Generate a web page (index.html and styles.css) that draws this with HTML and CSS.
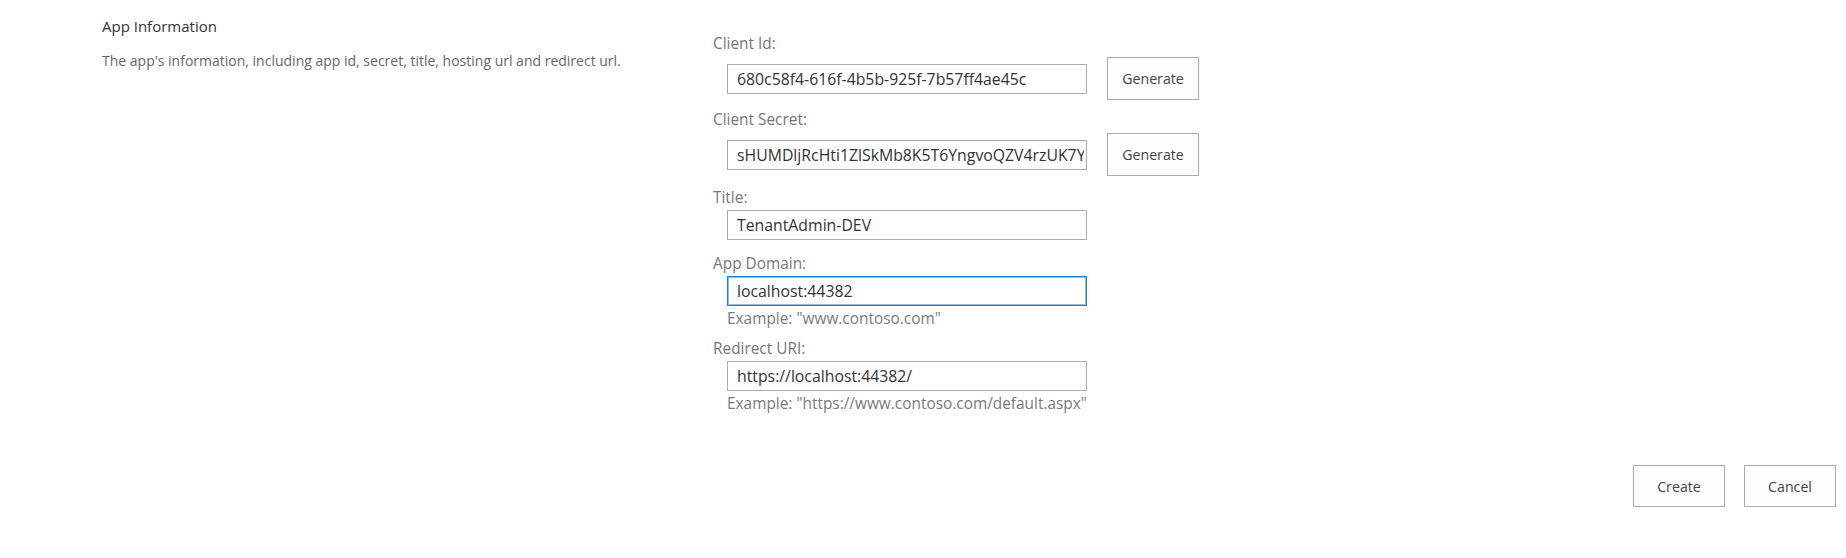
FILE: index.html
```html
<!DOCTYPE html>
<html>
<head>
<meta charset="utf-8">
<link rel="stylesheet" href="styles.css">
<title>App Information</title>
</head>
<body>
<div class="page">
  <div class="section">
    <div class="info">
      <h2 class="info-title">App Information</h2>
      <p class="info-desc">The app's information, including app id, secret, title, hosting url and redirect url.</p>
    </div>
    <div class="fields">
      <div class="field">
        <label class="field-label">Client Id:</label>
        <div class="field-row with-btn">
          <input class="text-input" type="text" value="680c58f4-616f-4b5b-925f-7b57ff4ae45c">
          <button class="btn">Generate</button>
        </div>
      </div>
      <div class="field">
        <label class="field-label">Client Secret:</label>
        <div class="field-row with-btn">
          <input class="text-input" type="text" value="sHUMDljRcHti1ZlSkMb8K5T6YngvoQZV4rzUK7Yx0Qe=">
          <button class="btn">Generate</button>
        </div>
      </div>
      <div class="field field-title">
        <label class="field-label">Title:</label>
        <div class="field-row">
          <input class="text-input" type="text" value="TenantAdmin-DEV">
        </div>
      </div>
      <div class="field field-domain">
        <label class="field-label">App Domain:</label>
        <div class="field-row">
          <input class="text-input focused" type="text" value="localhost:44382">
        </div>
        <div class="field-hint">Example: "www.contoso.com"</div>
      </div>
      <div class="field">
        <label class="field-label">Redirect URI:</label>
        <div class="field-row">
          <input class="text-input" type="text" value="https://localhost:44382/">
        </div>
        <div class="field-hint">Example: "https://www.contoso.com/default.aspx"</div>
      </div>
    </div>
  </div>
  <div class="actions">
    <button class="btn btn-lg">Create</button>
    <button class="btn btn-lg">Cancel</button>
  </div>
</div>
</body>
</html>
```
FILE: styles.css
```css
html, body {
  margin: 0;
  padding: 0;
  background: #ffffff;
}
body {
  font-family: "Open Sans", "Noto Sans", sans-serif;
  color: #444444;
}
.page {
  width: 1846px;
  display: flex;
  flex-direction: column;
}
.section {
  display: flex;
  flex-direction: row;
}
.info {
  width: 713px;
  flex-shrink: 0;
  box-sizing: border-box;
  padding-left: 102px;
  padding-top: 15px;
}
.info-title {
  margin: 0;
  font-size: 15px;
  font-weight: 400;
  line-height: 22px;
  color: #333333;
}
.info-desc {
  margin: 14px 0 0 0;
  font-size: 14px;
  line-height: 20px;
  color: #666666;
}
.fields {
  display: flex;
  flex-direction: column;
  gap: 10px;
  padding-top: 34px;
}
.field {
  display: flex;
  flex-direction: column;
}
.field-title {
  margin-top: 2px;
}
.field-domain {
  margin-top: 4px;
}
.field-label {
  font-size: 15.4px;
  line-height: 20px;
  color: #767676;
}
.field-row {
  display: flex;
  align-items: center;
  gap: 20px;
  padding-left: 14px;
  margin-top: 2px;
}
.field-row.with-btn {
  margin-top: 3px;
}
.text-input {
  width: 360px;
  height: 30px;
  box-sizing: border-box;
  border: 1px solid #ababab;
  background: #ffffff;
  padding: 0 2px 0 9px;
  font-family: "Open Sans", "Noto Sans", sans-serif;
  font-size: 15.8px;
  color: #333333;
  outline: none;
  margin: 0;
}
.text-input.focused {
  border-color: #1d7fd2;
  box-shadow: inset 0 0 0 1px #8cc0ec;
}
.field-hint {
  padding-left: 14px;
  margin-top: 3px;
  font-size: 15.4px;
  line-height: 20px;
  color: #7a7a7a;
}
.btn {
  width: 92px;
  height: 43px;
  box-sizing: border-box;
  border: 1px solid #ababab;
  background: #fdfdfd;
  font-family: "Open Sans", "Noto Sans", sans-serif;
  font-size: 14.2px;
  color: #444444;
  padding: 0;
  margin: 0;
}
.btn-lg {
  height: 42px;
}
.actions {
  display: flex;
  justify-content: flex-end;
  gap: 19px;
  padding-right: 10px;
  margin-top: 51px;
}
```
